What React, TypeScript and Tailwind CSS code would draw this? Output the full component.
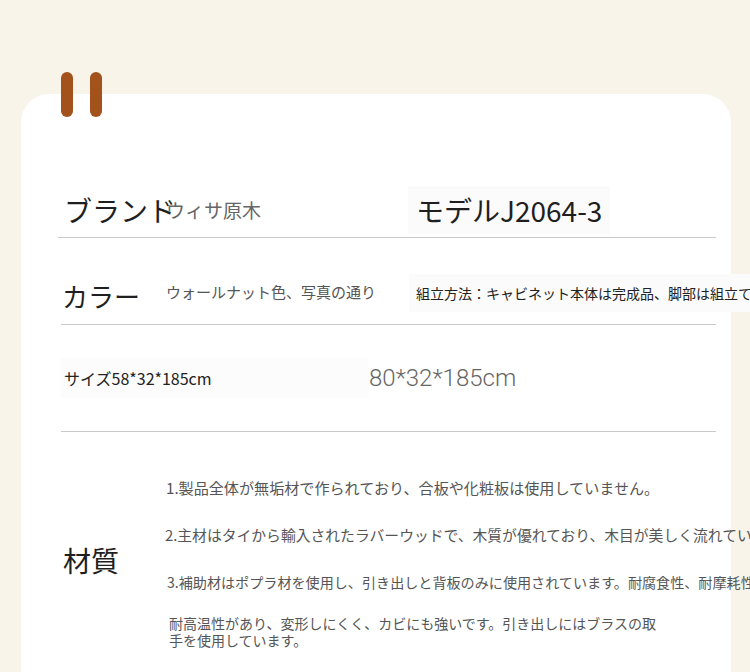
const jp = { fontFamily: '"Noto Sans CJK JP", "Noto Sans", sans-serif' };

export default function App() {
  return (
    <div
      className="h-[672px] w-[750px] overflow-hidden bg-[#f8f4e9] pt-[94px] pl-[21px]"
      style={jp}
    >
      <div className="relative w-[710px] h-[640px] rounded-[28px] bg-white">
        {/* binder rings */}
        <div className="absolute left-[40px] -top-[22px] flex gap-[17px]">
          <div className="h-[45px] w-[12px] rounded-full bg-[#a3521b]" />
          <div className="h-[45px] w-[12px] rounded-full bg-[#a3521b]" />
        </div>

        <div className="pt-[88px] pr-[15px]">
          {/* brand / model */}
          <div className="ml-[37px] flex h-[56px] items-center border-b border-[#c9c9c9] whitespace-nowrap">
            <div className="w-[108px] shrink-0 pl-[6px] text-[28px] leading-none text-[#1f1f1f]">ブランド</div>
            <div className="w-[250px] shrink-0 text-[19px] leading-none text-[#666]">ウィサ原木</div>
            <div className="shrink-0 bg-[#fbfbfb] -ml-[8px] px-[8px] py-[10px] text-[28px] leading-none text-[#1f1f1f]">
              モデルJ2064-3
            </div>
          </div>

          {/* colour / assembly */}
          <div className="ml-[40px] flex h-[87px] items-center border-b border-[#c9c9c9] pt-[30px] whitespace-nowrap">
            <div className="w-[105px] shrink-0 pl-[1px] text-[26px] leading-none text-[#1f1f1f]">カラー</div>
            <div className="w-[250px] shrink-0 -mt-[10px] text-[15px] leading-none text-[#555]">
              ウォールナット色、写真の通り
            </div>
            <div className="shrink-0 -mt-[6px] bg-[#fbfbfb] -ml-[7px] px-[7px] py-[12px] text-[14px] leading-none text-[#222]">
              組立方法：キャビネット本体は完成品、脚部は組立てが必要です
            </div>
          </div>

          {/* size */}
          <div className="ml-[40px] flex h-[107px] items-center border-b border-[#c9c9c9] whitespace-nowrap">
            <div className="w-[308px] shrink-0 bg-[#fcfcfc] pl-[3px] py-[12px] text-[16px] leading-none text-[#222]">
              サイズ58*32*185cm
            </div>
            <div
              className="shrink-0 text-[24px] font-light leading-none text-[#666]"
              style={{ fontFamily: 'Roboto, "Noto Sans", sans-serif' }}
            >
              80*32*185cm
            </div>
          </div>

          {/* material */}
          <div className="ml-[40px] flex whitespace-nowrap">
            <div className="w-[105px] shrink-0 pt-[114px] pl-[2px] text-[28px] leading-none text-[#1f1f1f]">材質</div>
            <div className="flex shrink-0 flex-col text-[#555]">
              <p className="mt-[46px] text-[15.1px] leading-[18px]">
                1.製品全体が無垢材で作られており、合板や化粧板は使用していません。
              </p>
              <p className="mt-[30px] -ml-[1px] text-[14.8px] leading-[18px]">
                2.主材はタイから輸入されたラバーウッドで、木質が優れており、木目が美しく流れています。
              </p>
              <p className="mt-[29px] ml-[1px] text-[14.1px] leading-[18px]">
                3.補助材はポプラ材を使用し、引き出しと背板のみに使用されています。耐腐食性、耐摩耗性
              </p>
              <p className="mt-[24px] ml-[3px] text-[14px] leading-[17px]">
                耐高温性があり、変形しにくく、カビにも強いです。引き出しにはブラスの取
                <br />
                手を使用しています。
              </p>
            </div>
          </div>
        </div>
      </div>
    </div>
  );
}
